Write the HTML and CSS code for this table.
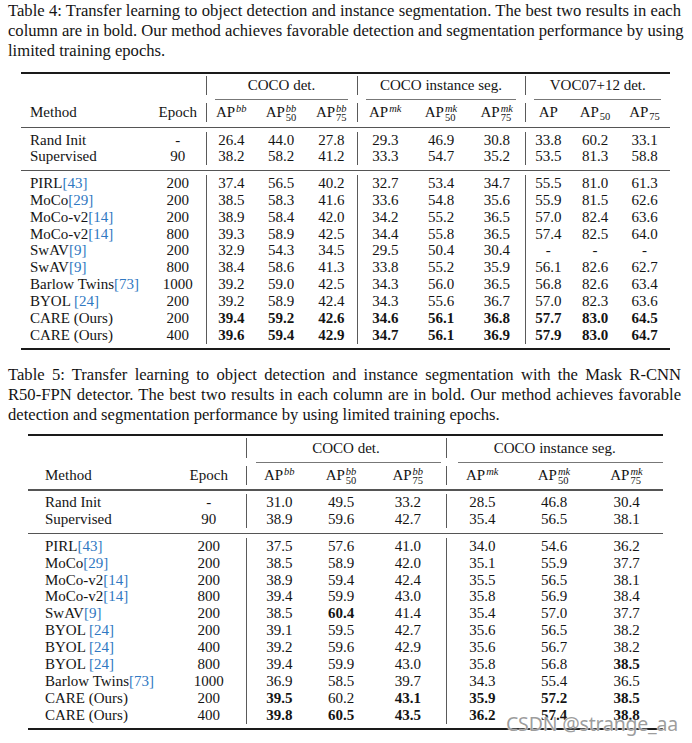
FILE: index.html
```html
<!DOCTYPE html>
<html>
<head>
<meta charset="utf-8">
<link rel="stylesheet" href="styles.css">
</head>
<body>
<div class="page">
  <div class="caption cap4">
    <div class="jl">Table 4: Transfer learning to object detection and instance segmentation. The best two results in each</div>
    <div class="jl">column are in bold. Our method achieves favorable detection and segmentation performance by using</div>
    <div class="ll">limited training epochs.</div>
  </div>

  <table class="t t4">
    <colgroup>
      <col class="c-m4"><col class="c-e4">
      <col class="w50"><col class="w50"><col class="w51">
      <col class="w56"><col class="w56"><col class="w56">
      <col class="w46"><col class="w48"><col class="w51">
    </colgroup>
    <tr class="rule"><td colspan="11"><div class="ln thick top"></div></td></tr>
    <tr class="h1">
      <td></td><td></td>
      <td colspan="3" class="b">COCO det.</td>
      <td colspan="3" class="b">COCO instance seg.</td>
      <td colspan="3" class="b">VOC07+12 det.</td>
    </tr>
    <tr class="rule cm"><td colspan="2"></td><td colspan="3"><div class="ln thin cm4"></div></td><td colspan="3"><div class="ln thin cm4"></div></td><td colspan="3"><div class="ln thin cm4"></div></td></tr>
    <tr class="h2">
      <td class="m">Method</td><td>Epoch</td>
      <td class="b">AP<span class="sp"><i>bb</i></span></td>
      <td>AP<span class="ss"><i>bb</i><span>50</span></span></td>
      <td>AP<span class="ss"><i>bb</i><span>75</span></span></td>
      <td class="b">AP<span class="sp"><i>mk</i></span></td>
      <td>AP<span class="ss"><i>mk</i><span>50</span></span></td>
      <td>AP<span class="ss"><i>mk</i><span>75</span></span></td>
      <td class="b">AP</td>
      <td>AP<span class="sb">50</span></td>
      <td>AP<span class="sb">75</span></td>
    </tr>
    <tr class="rule"><td colspan="11"><div class="ln mid"></div></td></tr>
    <tr class="d"><td class="m">Rand Init</td><td>-</td><td class="b">26.4</td><td>44.0</td><td>27.8</td><td class="b">29.3</td><td>46.9</td><td>30.8</td><td class="b">33.8</td><td>60.2</td><td>33.1</td></tr>
    <tr class="d"><td class="m">Supervised</td><td>90</td><td class="b">38.2</td><td>58.2</td><td>41.2</td><td class="b">33.3</td><td>54.7</td><td>35.2</td><td class="b">53.5</td><td>81.3</td><td>58.8</td></tr>
    <tr class="rule"><td colspan="11"><div class="ln mid"></div></td></tr>
    <tr class="d"><td class="m">PIRL<span class="ref">[43]</span></td><td>200</td><td class="b">37.4</td><td>56.5</td><td>40.2</td><td class="b">32.7</td><td>53.4</td><td>34.7</td><td class="b">55.5</td><td>81.0</td><td>61.3</td></tr>
    <tr class="d"><td class="m">MoCo<span class="ref">[29]</span></td><td>200</td><td class="b">38.5</td><td>58.3</td><td>41.6</td><td class="b">33.6</td><td>54.8</td><td>35.6</td><td class="b">55.9</td><td>81.5</td><td>62.6</td></tr>
    <tr class="d"><td class="m">MoCo-v2<span class="ref">[14]</span></td><td>200</td><td class="b">38.9</td><td>58.4</td><td>42.0</td><td class="b">34.2</td><td>55.2</td><td>36.5</td><td class="b">57.0</td><td>82.4</td><td>63.6</td></tr>
    <tr class="d"><td class="m">MoCo-v2<span class="ref">[14]</span></td><td>800</td><td class="b">39.3</td><td>58.9</td><td>42.5</td><td class="b">34.4</td><td>55.8</td><td>36.5</td><td class="b">57.4</td><td>82.5</td><td>64.0</td></tr>
    <tr class="d"><td class="m">SwAV<span class="ref">[9]</span></td><td>200</td><td class="b">32.9</td><td>54.3</td><td>34.5</td><td class="b">29.5</td><td>50.4</td><td>30.4</td><td class="b">-</td><td>-</td><td>-</td></tr>
    <tr class="d"><td class="m">SwAV<span class="ref">[9]</span></td><td>800</td><td class="b">38.4</td><td>58.6</td><td>41.3</td><td class="b">33.8</td><td>55.2</td><td>35.9</td><td class="b">56.1</td><td>82.6</td><td>62.7</td></tr>
    <tr class="d"><td class="m">Barlow Twins<span class="ref">[73]</span></td><td>1000</td><td class="b">39.2</td><td>59.0</td><td>42.5</td><td class="b">34.3</td><td>56.0</td><td>36.5</td><td class="b">56.8</td><td>82.6</td><td>63.4</td></tr>
    <tr class="d"><td class="m">BYOL <span class="ref">[24]</span></td><td>200</td><td class="b">39.2</td><td>58.9</td><td>42.4</td><td class="b">34.3</td><td>55.6</td><td>36.7</td><td class="b">57.0</td><td>82.3</td><td>63.6</td></tr>
    <tr class="d"><td class="m">CARE (Ours)</td><td>200</td><td class="b"><b>39.4</b></td><td><b>59.2</b></td><td><b>42.6</b></td><td class="b"><b>34.6</b></td><td><b>56.1</b></td><td><b>36.8</b></td><td class="b"><b>57.7</b></td><td><b>83.0</b></td><td><b>64.5</b></td></tr>
    <tr class="d"><td class="m">CARE (Ours)</td><td>400</td><td class="b"><b>39.6</b></td><td><b>59.4</b></td><td><b>42.9</b></td><td class="b"><b>34.7</b></td><td><b>56.1</b></td><td><b>36.9</b></td><td class="b"><b>57.9</b></td><td><b>83.0</b></td><td><b>64.7</b></td></tr>
    <tr class="rule"><td colspan="11"><div class="ln thick bot"></div></td></tr>
  </table>

  <div class="caption cap5">
    <div class="jl">Table 5: Transfer learning to object detection and instance segmentation with the Mask R-CNN</div>
    <div class="jl">R50-FPN detector. The best two results in each column are in bold. Our method achieves favorable</div>
    <div class="ll">detection and segmentation performance by using limited training epochs.</div>
  </div>

  <table class="t t5">
    <colgroup>
      <col class="c-m5"><col class="c-e5">
      <col class="w66"><col class="w58"><col class="w76">
      <col class="w72"><col class="w72"><col class="w73">
    </colgroup>
    <tr class="rule"><td colspan="8"><div class="ln thick top"></div></td></tr>
    <tr class="h1 h1-5">
      <td></td><td></td>
      <td colspan="3" class="b">COCO det.</td>
      <td colspan="3" class="b">COCO instance seg.</td>
    </tr>
    <tr class="rule cm"><td colspan="2"></td><td colspan="3"><div class="ln thin cm5a"></div></td><td colspan="3"><div class="ln thin cm5b"></div></td></tr>
    <tr class="h2 h2-5">
      <td class="m">Method</td><td>Epoch</td>
      <td class="b">AP<span class="sp"><i>bb</i></span></td>
      <td>AP<span class="ss"><i>bb</i><span>50</span></span></td>
      <td>AP<span class="ss"><i>bb</i><span>75</span></span></td>
      <td class="b">AP<span class="sp"><i>mk</i></span></td>
      <td>AP<span class="ss"><i>mk</i><span>50</span></span></td>
      <td>AP<span class="ss"><i>mk</i><span>75</span></span></td>
    </tr>
    <tr class="rule"><td colspan="8"><div class="ln mid"></div></td></tr>
    <tr class="d"><td class="m">Rand Init</td><td>-</td><td class="b">31.0</td><td>49.5</td><td>33.2</td><td class="b">28.5</td><td>46.8</td><td>30.4</td></tr>
    <tr class="d"><td class="m">Supervised</td><td>90</td><td class="b">38.9</td><td>59.6</td><td>42.7</td><td class="b">35.4</td><td>56.5</td><td>38.1</td></tr>
    <tr class="rule"><td colspan="8"><div class="ln mid"></div></td></tr>
    <tr class="d"><td class="m">PIRL<span class="ref">[43]</span></td><td>200</td><td class="b">37.5</td><td>57.6</td><td>41.0</td><td class="b">34.0</td><td>54.6</td><td>36.2</td></tr>
    <tr class="d"><td class="m">MoCo<span class="ref">[29]</span></td><td>200</td><td class="b">38.5</td><td>58.9</td><td>42.0</td><td class="b">35.1</td><td>55.9</td><td>37.7</td></tr>
    <tr class="d"><td class="m">MoCo-v2<span class="ref">[14]</span></td><td>200</td><td class="b">38.9</td><td>59.4</td><td>42.4</td><td class="b">35.5</td><td>56.5</td><td>38.1</td></tr>
    <tr class="d"><td class="m">MoCo-v2<span class="ref">[14]</span></td><td>800</td><td class="b">39.4</td><td>59.9</td><td>43.0</td><td class="b">35.8</td><td>56.9</td><td>38.4</td></tr>
    <tr class="d"><td class="m">SwAV<span class="ref">[9]</span></td><td>200</td><td class="b">38.5</td><td><b>60.4</b></td><td>41.4</td><td class="b">35.4</td><td>57.0</td><td>37.7</td></tr>
    <tr class="d"><td class="m">BYOL <span class="ref">[24]</span></td><td>200</td><td class="b">39.1</td><td>59.5</td><td>42.7</td><td class="b">35.6</td><td>56.5</td><td>38.2</td></tr>
    <tr class="d"><td class="m">BYOL <span class="ref">[24]</span></td><td>400</td><td class="b">39.2</td><td>59.6</td><td>42.9</td><td class="b">35.6</td><td>56.7</td><td>38.2</td></tr>
    <tr class="d"><td class="m">BYOL <span class="ref">[24]</span></td><td>800</td><td class="b">39.4</td><td>59.9</td><td>43.0</td><td class="b">35.8</td><td>56.8</td><td><b>38.5</b></td></tr>
    <tr class="d"><td class="m">Barlow Twins<span class="ref">[73]</span></td><td>1000</td><td class="b">36.9</td><td>58.5</td><td>39.7</td><td class="b">34.3</td><td>55.4</td><td>36.5</td></tr>
    <tr class="d"><td class="m">CARE (Ours)</td><td>200</td><td class="b"><b>39.5</b></td><td>60.2</td><td><b>43.1</b></td><td class="b"><b>35.9</b></td><td><b>57.2</b></td><td><b>38.5</b></td></tr>
    <tr class="d"><td class="m">CARE (Ours)</td><td>400</td><td class="b"><b>39.8</b></td><td><b>60.5</b></td><td><b>43.5</b></td><td class="b"><b>36.2</b></td><td><b>57.4</b></td><td><b>38.8</b></td></tr>
    <tr class="rule"><td colspan="8"><div class="ln thick bot"></div></td></tr>
  </table>

  <div class="wm">CSDN @strange_aa</div>
</div>
</body>
</html>
```

FILE: styles.css
```css
html, body {
  margin: 0;
  padding: 0;
  background: #fff;
}

.page {
  position: relative;
  width: 692px;
  height: 743px;
  overflow: hidden;
  font-family: "Liberation Serif", "Times New Roman", serif;
  color: #141414;
}

.caption {
  padding: 0 11px 0 8px;
  font-size: 16.6px;
  line-height: 20px;
}

.cap4 {
  padding-top: 1px;
}

.cap5 {
  margin-top: 15px;
}

.jl {
  text-align: justify;
  text-align-last: justify;
  white-space: nowrap;
}

.ll {
  text-align: left;
}

.t {
  border-collapse: collapse;
  table-layout: fixed;
  font-size: 15px;
}

.t4 {
  margin-left: 21px;
  width: 649px;
  margin-top: 11px;
}

.t5 {
  margin-left: 28px;
  width: 635px;
  margin-top: 9px;
}

.t td {
  padding: 0;
  text-align: center;
  white-space: nowrap;
}

.t td.m {
  text-align: left;
}

.t4 td.m { padding-left: 9px; }
.t5 td.m { padding-left: 17px; }

.t td.b {
  border-left: 1px solid #5a5a5a;
}

.t tr.rule td {
  border-left: none;
}

.c-m4 { width: 129px; }
.c-e4 { width: 56px; }
.c-m5 { width: 144px; }
.c-e5 { width: 74px; }
.w46 { width: 46px; }
.w48 { width: 48px; }
.w50 { width: 50px; }
.w51 { width: 51px; }
.w56 { width: 56px; }
.w58 { width: 58px; }
.w66 { width: 66px; }
.w72 { width: 72px; }
.w73 { width: 73px; }
.w76 { width: 76px; }

.ln {
  display: block;
}

.ln.thick {
  height: 2px;
  background: #1a1a1a;
}

.ln.top {
  margin-bottom: 2px;
}

.ln.bot {
  margin-top: 4px;
}

.ln.mid {
  height: 1.5px;
  background: #555;
  margin: 4.5px 0 3.5px;
}

.ln.thin {
  height: 1px;
  background: #777;
  margin: 4px 0 3px;
}

.cm4 { margin-left: 9px !important; margin-right: 9px !important; }
.cm5a { margin-left: 10px !important; margin-right: 5px !important; }
.cm5b { margin-left: 12px !important; margin-right: 0 !important; }

.h1 td { height: 19px; line-height: 19px; }
.h2 td { height: 19px; line-height: 19px; }
.h1-5 td { height: 20.5px; line-height: 20.5px; }
.h2-5 td { height: 18.5px; line-height: 18.5px; }

.d td {
  height: 16.9px;
  line-height: 16.9px;
}

.t5 .d td {
  height: 16.9px;
  line-height: 16.9px;
}

.ref {
  color: #2f78c2;
}

.sp {
  font-size: 10.5px;
  vertical-align: 5px;
  line-height: 0;
  margin-left: 1px;
}

.sp i, .ss i {
  font-style: italic;
}

.ss {
  display: inline-flex;
  flex-direction: column;
  font-size: 10.5px;
  line-height: 9px;
  vertical-align: 5px;
  margin: -8px 0 -8px 1px;
  text-align: left;
}

.sb {
  font-size: 10.5px;
  vertical-align: -3px;
  line-height: 0;
  margin-left: 1px;
}

.wm {
  position: absolute;
  left: 506px;
  top: 710px;
  font-family: "Noto Sans", "DejaVu Sans", sans-serif;
  font-size: 19.5px;
  line-height: 28px;
  color: rgba(140, 140, 140, 0.85);
  text-shadow: 0 0 2px #fff, 0 0 1px #fff;
  letter-spacing: -0.2px;
  white-space: nowrap;
}
```
